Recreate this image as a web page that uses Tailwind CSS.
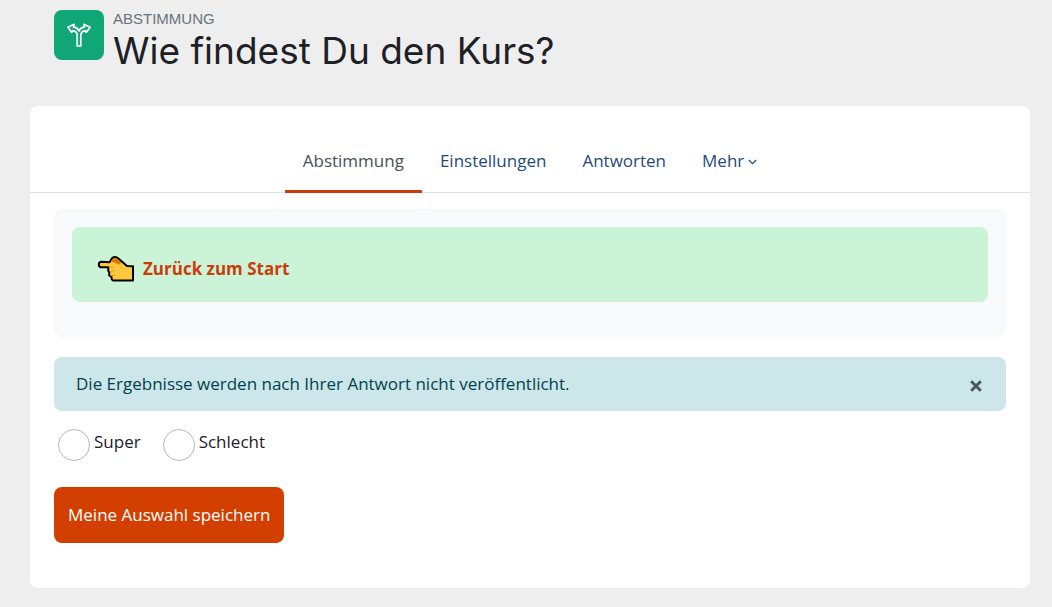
<!DOCTYPE html>
<html lang="de">
  <head>
    <meta charset="UTF-8" />
    <meta name="viewport" content="width=device-width, initial-scale=1.0" />
    <title>Wie findest Du den Kurs?</title>
    <script src="https://cdn.jsdelivr.net/npm/@tailwindcss/browser@4"></script>
  </head>
  <body
    class="min-h-screen bg-[#eeeeee] pl-[30px] pr-[22px] pb-5 font-['Open_Sans',sans-serif] text-[17px] leading-6 text-[#1d2125]"
  >
    <!-- Page header -->
    <header class="flex gap-[9px] px-6 pt-[10px]">
      <div
        class="flex size-[50px] shrink-0 items-center justify-center rounded-lg bg-[#11a676]"
      >
        <svg
          class="size-6"
          viewBox="0 0 24 24"
          fill="none"
          stroke="#fff"
          stroke-width="1.7"
          stroke-linejoin="round"
          aria-hidden="true"
        >
          <path
            d="M10.2 23V12.2C10.2 9.8 8.2 8.2 5.6 7.7L4.8 9.4 .9 4.2 7.1 1.3 6.5 3.9C9 4.4 11 5.8 12 7.9 13 5.8 15 4.4 17.5 3.9L16.9 1.3 23.1 4.2 19.2 9.4 18.4 7.7C15.8 8.2 13.8 9.8 13.8 12.2V23Z"
          />
        </svg>
      </div>
      <div class="-mt-px">
        <p
          class="font-['Liberation_Sans',sans-serif] text-[15px] leading-5 text-[#6a737b] uppercase"
        >
          Abstimmung
        </p>
        <h1 class="font-['Inter',sans-serif] text-[37px] leading-11">
          Wie findest Du den Kurs?
        </h1>
      </div>
    </header>

    <main class="mt-[33px] rounded-lg bg-white pb-[45px]">
      <!-- Tabs -->
      <nav
        class="flex justify-center border-b border-[#dee2e6] pt-6 text-[#1f4a77]"
      >
        <a
          href="#"
          class="-mb-px border-b-3 border-[#ca3d0b] px-[18px] pt-[19px] pb-[17px] text-[#495057]"
          aria-current="page"
          >Abstimmung</a
        >
        <a href="#" class="px-[18px] pt-[19px] pb-[19px]">Einstellungen</a>
        <a href="#" class="px-[18px] pt-[19px] pb-[19px]">Antworten</a>
        <a href="#" class="flex items-center gap-1 px-[18px] pt-[19px] pb-[19px]">
          Mehr
          <svg
            class="mt-[2px] h-[6px] w-[9px]"
            viewBox="0 0 9 6"
            fill="none"
            stroke="currentColor"
            stroke-width="1.2"
            aria-hidden="true"
          >
            <path d="M.8 1 4.5 4.7 8.2 1" />
          </svg>
        </a>
      </nav>

      <div class="px-6 pt-4">
        <!-- Back to start -->
        <section class="rounded-lg bg-[#f8f9fb] px-[18px] pt-[18px] pb-[35px]">
          <div class="rounded-lg bg-[#cbf3d7] px-6 pt-[30px] pb-[21px]">
            <a
              href="#"
              class="flex items-center gap-2 font-bold text-[#ca3d0b]"
            >
              <svg
                class="-my-[2px] h-[28px] w-[39px]"
                viewBox="0 0 39 28"
                stroke-linejoin="round"
                aria-hidden="true"
              >
                <path
                  d="M13.5 7.2 16 3.2Q19.2.6 22.4 3.5L31 11 37 11.2V25.5H17.2L15.8 24.5 15.5 22 13.2 20.5 13.3 17.5 12.3 16V12.2H4.8Q2.8 11.8 2.8 9.6 2.8 7.2 5 6.8Z"
                  fill="#ffc83d"
                  stroke="#000"
                  stroke-width="2"
                />
                <path
                  d="M14.5 6.7 16.7 4Q19.1 2 21.6 4.3L25.4 7.8 22.6 9.7Q19.3 7 14.5 6.7Z"
                  fill="#d67d00"
                />
                <path
                  d="M13.5 11.8H17.5M14 16H18.5M14.5 20.3H19"
                  fill="none"
                  stroke="#e39d16"
                  stroke-width="1.2"
                />
              </svg>
              Zurück zum Start
            </a>
          </div>
        </section>

        <!-- Notice -->
        <div
          class="mt-5 flex items-center justify-between rounded-lg bg-[#cce6e9] py-[15px] pr-6 pl-[22px] text-[#00434e]"
          role="alert"
        >
          <p>Die Ergebnisse werden nach Ihrer Antwort nicht veröffentlicht.</p>
          <button type="button" aria-label="Schließen" class="text-[#48595a]">
            <svg
              class="mt-1 size-3"
              viewBox="0 0 12 12"
              stroke="currentColor"
              stroke-width="3"
              aria-hidden="true"
            >
              <path d="M1.2 1.2 10.8 10.8M10.8 1.2 1.2 10.8" />
            </svg>
          </button>
        </div>

        <!-- Choices -->
        <form>
          <div class="mt-[18px] flex gap-[22px] px-1">
            <div class="flex gap-1">
              <input
                type="radio"
                id="choice-super"
                name="answer"
                class="size-8 appearance-none rounded-full border border-[#b8b8b8] bg-white checked:border-8 checked:border-[#d23f00]"
              />
              <label for="choice-super" class="pt-px">Super</label>
            </div>
            <div class="flex gap-1">
              <input
                type="radio"
                id="choice-schlecht"
                name="answer"
                class="size-8 appearance-none rounded-full border border-[#b8b8b8] bg-white checked:border-8 checked:border-[#d23f00]"
              />
              <label for="choice-schlecht" class="pt-px">Schlecht</label>
            </div>
          </div>
          <button
            type="submit"
            class="mt-[26px] rounded-lg bg-[#d23f00] px-[14px] py-4 font-medium text-white"
          >
            Meine Auswahl speichern
          </button>
        </form>
      </div>
    </main>
  </body>
</html>
